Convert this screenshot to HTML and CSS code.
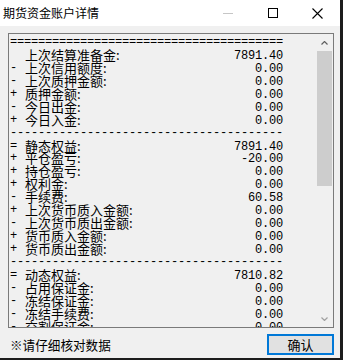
FILE: index.html
```html
<!DOCTYPE html>
<html lang="zh-CN">
<head>
<meta charset="UTF-8">
<title>期货资金账户详情</title>
<link rel="stylesheet" href="styles.css">
</head>
<body>
  <div class="window">
    <div class="titlebar">
      <span class="title">期货资金账户详情</span>
      <div class="caption-btn">
        <svg width="10" height="10" viewBox="0 0 10 10"><rect x="0" y="5" width="10" height="1" fill="#c6c6c6"/></svg>
      </div>
      <div class="caption-btn">
        <svg width="10" height="10" viewBox="0 0 10 10"><rect x="0.5" y="0.5" width="9" height="9" fill="none" stroke="#000"/></svg>
      </div>
      <div class="caption-btn">
        <svg width="11" height="11" viewBox="0 0 11 11"><path d="M0.5 0.5 L10.5 10.5 M10.5 0.5 L0.5 10.5" stroke="#000" stroke-width="1.1" fill="none"/></svg>
      </div>
    </div>

    <div class="client">
      <div class="detail-box">
        <div class="lines">
          <div class="rule">==========================================</div>
          <div class="row"><span class="sign"></span><span class="label">上次结算准备金:</span><span class="value">7891.40</span></div>
          <div class="row"><span class="sign">-</span><span class="label">上次信用额度:</span><span class="value">0.00</span></div>
          <div class="row"><span class="sign">-</span><span class="label">上次质押金额:</span><span class="value">0.00</span></div>
          <div class="row"><span class="sign">+</span><span class="label">质押金额:</span><span class="value">0.00</span></div>
          <div class="row"><span class="sign">-</span><span class="label">今日出金:</span><span class="value">0.00</span></div>
          <div class="row"><span class="sign">+</span><span class="label">今日入金:</span><span class="value">0.00</span></div>
          <div class="rule">------------------------------------------</div>
          <div class="row"><span class="sign">=</span><span class="label">静态权益:</span><span class="value">7891.40</span></div>
          <div class="row"><span class="sign">+</span><span class="label">平仓盈亏:</span><span class="value">-20.00</span></div>
          <div class="row"><span class="sign">+</span><span class="label">持仓盈亏:</span><span class="value">0.00</span></div>
          <div class="row"><span class="sign">+</span><span class="label">权利金:</span><span class="value">0.00</span></div>
          <div class="row"><span class="sign">-</span><span class="label">手续费:</span><span class="value">60.58</span></div>
          <div class="row"><span class="sign">+</span><span class="label">上次货币质入金额:</span><span class="value">0.00</span></div>
          <div class="row"><span class="sign">-</span><span class="label">上次货币质出金额:</span><span class="value">0.00</span></div>
          <div class="row"><span class="sign">+</span><span class="label">货币质入金额:</span><span class="value">0.00</span></div>
          <div class="row"><span class="sign">+</span><span class="label">货币质出金额:</span><span class="value">0.00</span></div>
          <div class="rule">------------------------------------------</div>
          <div class="row"><span class="sign">=</span><span class="label">动态权益:</span><span class="value">7810.82</span></div>
          <div class="row"><span class="sign">-</span><span class="label">占用保证金:</span><span class="value">0.00</span></div>
          <div class="row"><span class="sign">-</span><span class="label">冻结保证金:</span><span class="value">0.00</span></div>
          <div class="row"><span class="sign">-</span><span class="label">冻结手续费:</span><span class="value">0.00</span></div>
          <div class="row"><span class="sign">-</span><span class="label">交割保证金:</span><span class="value">0.00</span></div>
        </div>
        <div class="scrollbar">
          <div class="arrow">
            <svg width="7" height="4" viewBox="0 0 7 4"><path d="M0.5 3.5 L3.5 0.5 L6.5 3.5" stroke="#606060" stroke-width="1.2" fill="none"/></svg>
          </div>
          <div class="thumb"></div>
          <div class="track"></div>
          <div class="arrow">
            <svg width="7" height="4" viewBox="0 0 7 4"><path d="M0.5 0.5 L3.5 3.5 L6.5 0.5" stroke="#a0a0a0" stroke-width="1.2" fill="none"/></svg>
          </div>
        </div>
      </div>

      <div class="footer">
        <span class="note">※请仔细核对数据</span>
        <button class="ok-btn">确认</button>
      </div>
    </div>
  </div>
</body>
</html>
```

FILE: styles.css
```css
body {
  margin: 0;
  width: 343px;
  height: 360px;
  overflow: hidden;
  background-color: #1c1c1c;
}

.window {
  width: 340px;
  height: 358px;
  background-color: #f0f0f0;
  display: flex;
  flex-direction: column;
  font-family: "Noto Sans CJK SC", sans-serif;
  color: #000;
}

.titlebar {
  height: 26px;
  background-color: #ffffff;
  display: flex;
  align-items: center;
}

.title {
  flex: 1;
  padding-left: 3px;
  font-size: 12px;
  line-height: 26px;
}

.caption-btn {
  width: 45px;
  height: 26px;
  display: flex;
  align-items: center;
  justify-content: center;
}

.client {
  flex: 1;
  display: flex;
  flex-direction: column;
  padding: 7px 6px 0 8px;
}

/* read-only text box with the account lines */
.detail-box {
  height: 295px;
  box-sizing: border-box;
  border: 1px solid #7a7a7a;
  display: flex;
}

.lines {
  flex: 1;
  padding: 2px 33px 0 1px;
  overflow: hidden;
}

.row {
  display: grid;
  grid-template-columns: 15px 1fr auto;
  height: 12.94px;
  line-height: 12.94px;
  white-space: nowrap;
}

.rule {
  height: 12.94px;
  line-height: 12.94px;
  white-space: nowrap;
  overflow: hidden;
  font-family: "Liberation Mono", monospace;
  font-size: 12px;
  letter-spacing: -0.2px;
}

.sign,
.value {
  font-family: "Liberation Mono", monospace;
  font-size: 12px;
  letter-spacing: -0.2px;
}

.value {
  padding-top: 1px;
}

.label {
  font-size: 13px;
}

.scrollbar {
  width: 17px;
  display: flex;
  flex-direction: column;
}

.arrow {
  height: 17px;
  display: flex;
  align-items: center;
  justify-content: center;
}

.thumb {
  height: 135px;
  margin: 0 1px;
  background-color: #cdcdcd;
}

.track {
  flex: 1;
}

.footer {
  display: flex;
  align-items: center;
  justify-content: space-between;
  margin-top: 6px;
  padding-left: 2px;
}

.note {
  font-size: 12.6px;
}

.ok-btn {
  width: 67px;
  height: 21px;
  padding: 0;
  border: 2px solid #0078d7;
  background-color: #e1e1e1;
  font-family: "Noto Sans CJK SC", sans-serif;
  font-size: 13px;
  line-height: 15px;
  color: #000;
}
```
